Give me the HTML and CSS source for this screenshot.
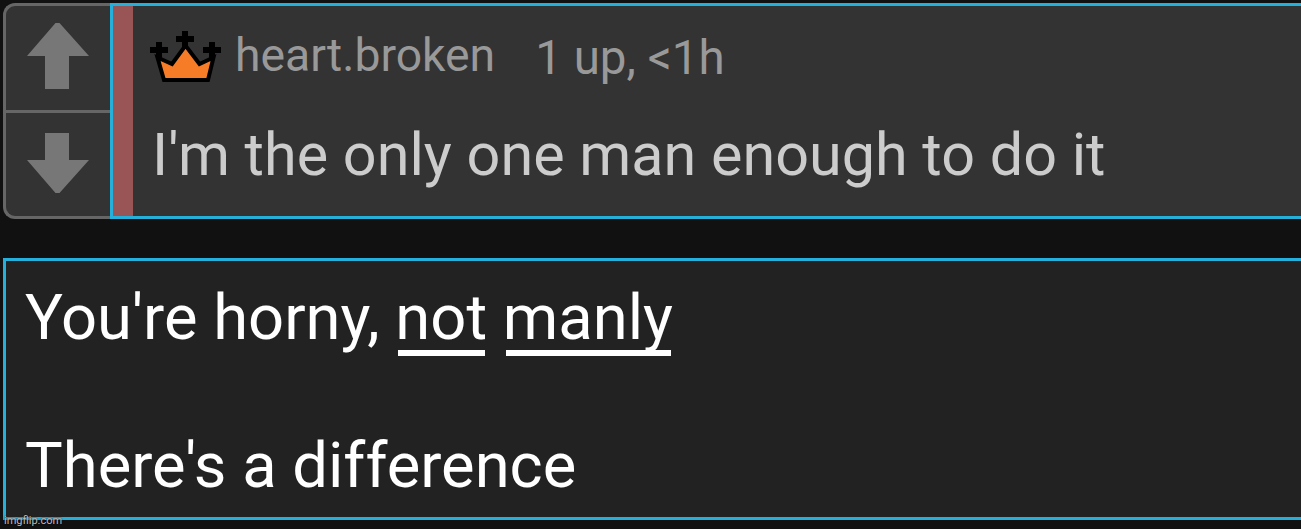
FILE: index.html
```html
<!DOCTYPE html>
<html lang="en">
<head>
  <meta charset="UTF-8">
  <meta name="viewport" content="width=device-width, initial-scale=1.0">
  <title>Comments</title>
  <link rel="stylesheet" href="styles.css">
</head>
<body>
  <!-- Comment -->
  <div class="comment">
    <div class="votes">
      <div class="vote up">
        <svg width="64" height="68" viewBox="0 0 64 68"><path d="M29.5 1h4L63 34H43v33H19V34H1z"/></svg>
      </div>
      <div class="vote down">
        <svg width="64" height="62" viewBox="0 0 64 62"><path d="M19 1h24v27h20L33.5 61h-4L1 28h18z"/></svg>
      </div>
    </div>
    <div class="comment-main">
      <div class="comment-head">
        <svg class="crown" width="72" height="54" viewBox="0 0 72 54">
          <path d="M7.500 27.500 22 34 35.500 15.500 49.500 34 63.500 27.500 58 50H14z" fill="#f77c28" stroke="#000" stroke-width="4"/>
          <path d="M0 17h6v-5h6v5h6v6h-6v6H6v-6H0zM26 6h6V1h6v5h6v6h-6v7h-6v-7h-6zM53 17h6v-5h6v5h6v6h-6v6h-6v-6h-6z"/>
        </svg>
        <a class="user">heart.broken</a>
        <span class="meta">1 up, &lt;1h</span>
      </div>
      <div class="comment-text">I'm the only one man enough to do it</div>
    </div>
  </div>

  <!-- Reply box -->
  <div class="reply">
    <p>You're horny, <u>not</u> <u>manly</u></p>
    <p>There's a difference</p>
  </div>

  <div class="watermark">imgflip.com</div>
</body>
</html>
```

FILE: styles.css
```css
body {
  margin: 0;
  height: 529px;
  padding: 3px 0 0 3px;
  box-sizing: border-box;
  overflow: hidden;
  background-color: #111;
  font-family: Roboto, "Liberation Sans", sans-serif;
}

/* Comment */
.comment {
  display: flex;
  height: 216px;
}
.votes {
  display: flex;
  flex-direction: column;
  width: 107px;
  box-sizing: border-box;
  border: 3px solid #666;
  border-right: none;
  border-radius: 12px 0 0 12px;
  background-color: #333;
}
.vote {
  display: flex;
  justify-content: center;
  padding-right: 1px;
}
.vote svg {
  fill: #777;
}
.vote.up {
  padding-top: 16px;
  height: 88px;
  border-bottom: 3px solid #666;
}
.vote.down {
  padding-top: 19px;
  height: 84px;
}
.comment-main {
  flex: 1;
  box-sizing: border-box;
  padding: 21px 0 0 37px;
  border: 3px solid #25b0dc;
  border-right: none;
  background: linear-gradient(#995456, #995456) left / 20px 100% no-repeat #333;
}
.comment-head {
  display: flex;
  align-items: flex-start;
  height: 56px;
  line-height: 56px;
  color: #999;
  white-space: nowrap;
}
.crown {
  margin-top: 3px;
}
.user {
  margin-left: 13px;
  font-size: 46.3px;
}
.meta {
  margin: 3px 0 0 40px;
  font-size: 47.5px;
}
.comment-text {
  margin: 37px 0 0 2px;
  font-size: 59.3px;
  line-height: 70px;
  color: #ccc;
  white-space: nowrap;
}

/* Reply box */
.reply {
  margin-top: 39px;
  height: 262px;
  box-sizing: border-box;
  padding: 19px 0 0 19px;
  border: 3px solid #25b0dc;
  border-right: none;
  background-color: #222;
  color: #fff;
  font-size: 63.3px;
  line-height: 74px;
}
.reply p {
  margin: 0 0 74px;
}
/* underline starts at the stem of the first letter */
.reply u {
  padding-bottom: 2px;
  text-decoration: none;
  background: linear-gradient(#fff, #fff) 3px 100% / calc(100% - 5px) 6px no-repeat;
}

.watermark {
  position: absolute;
  left: 4px;
  bottom: 1px;
  font-size: 11px;
  line-height: 14px;
  color: #bbb;
  text-shadow: 0 0 2px #000;
}
```
